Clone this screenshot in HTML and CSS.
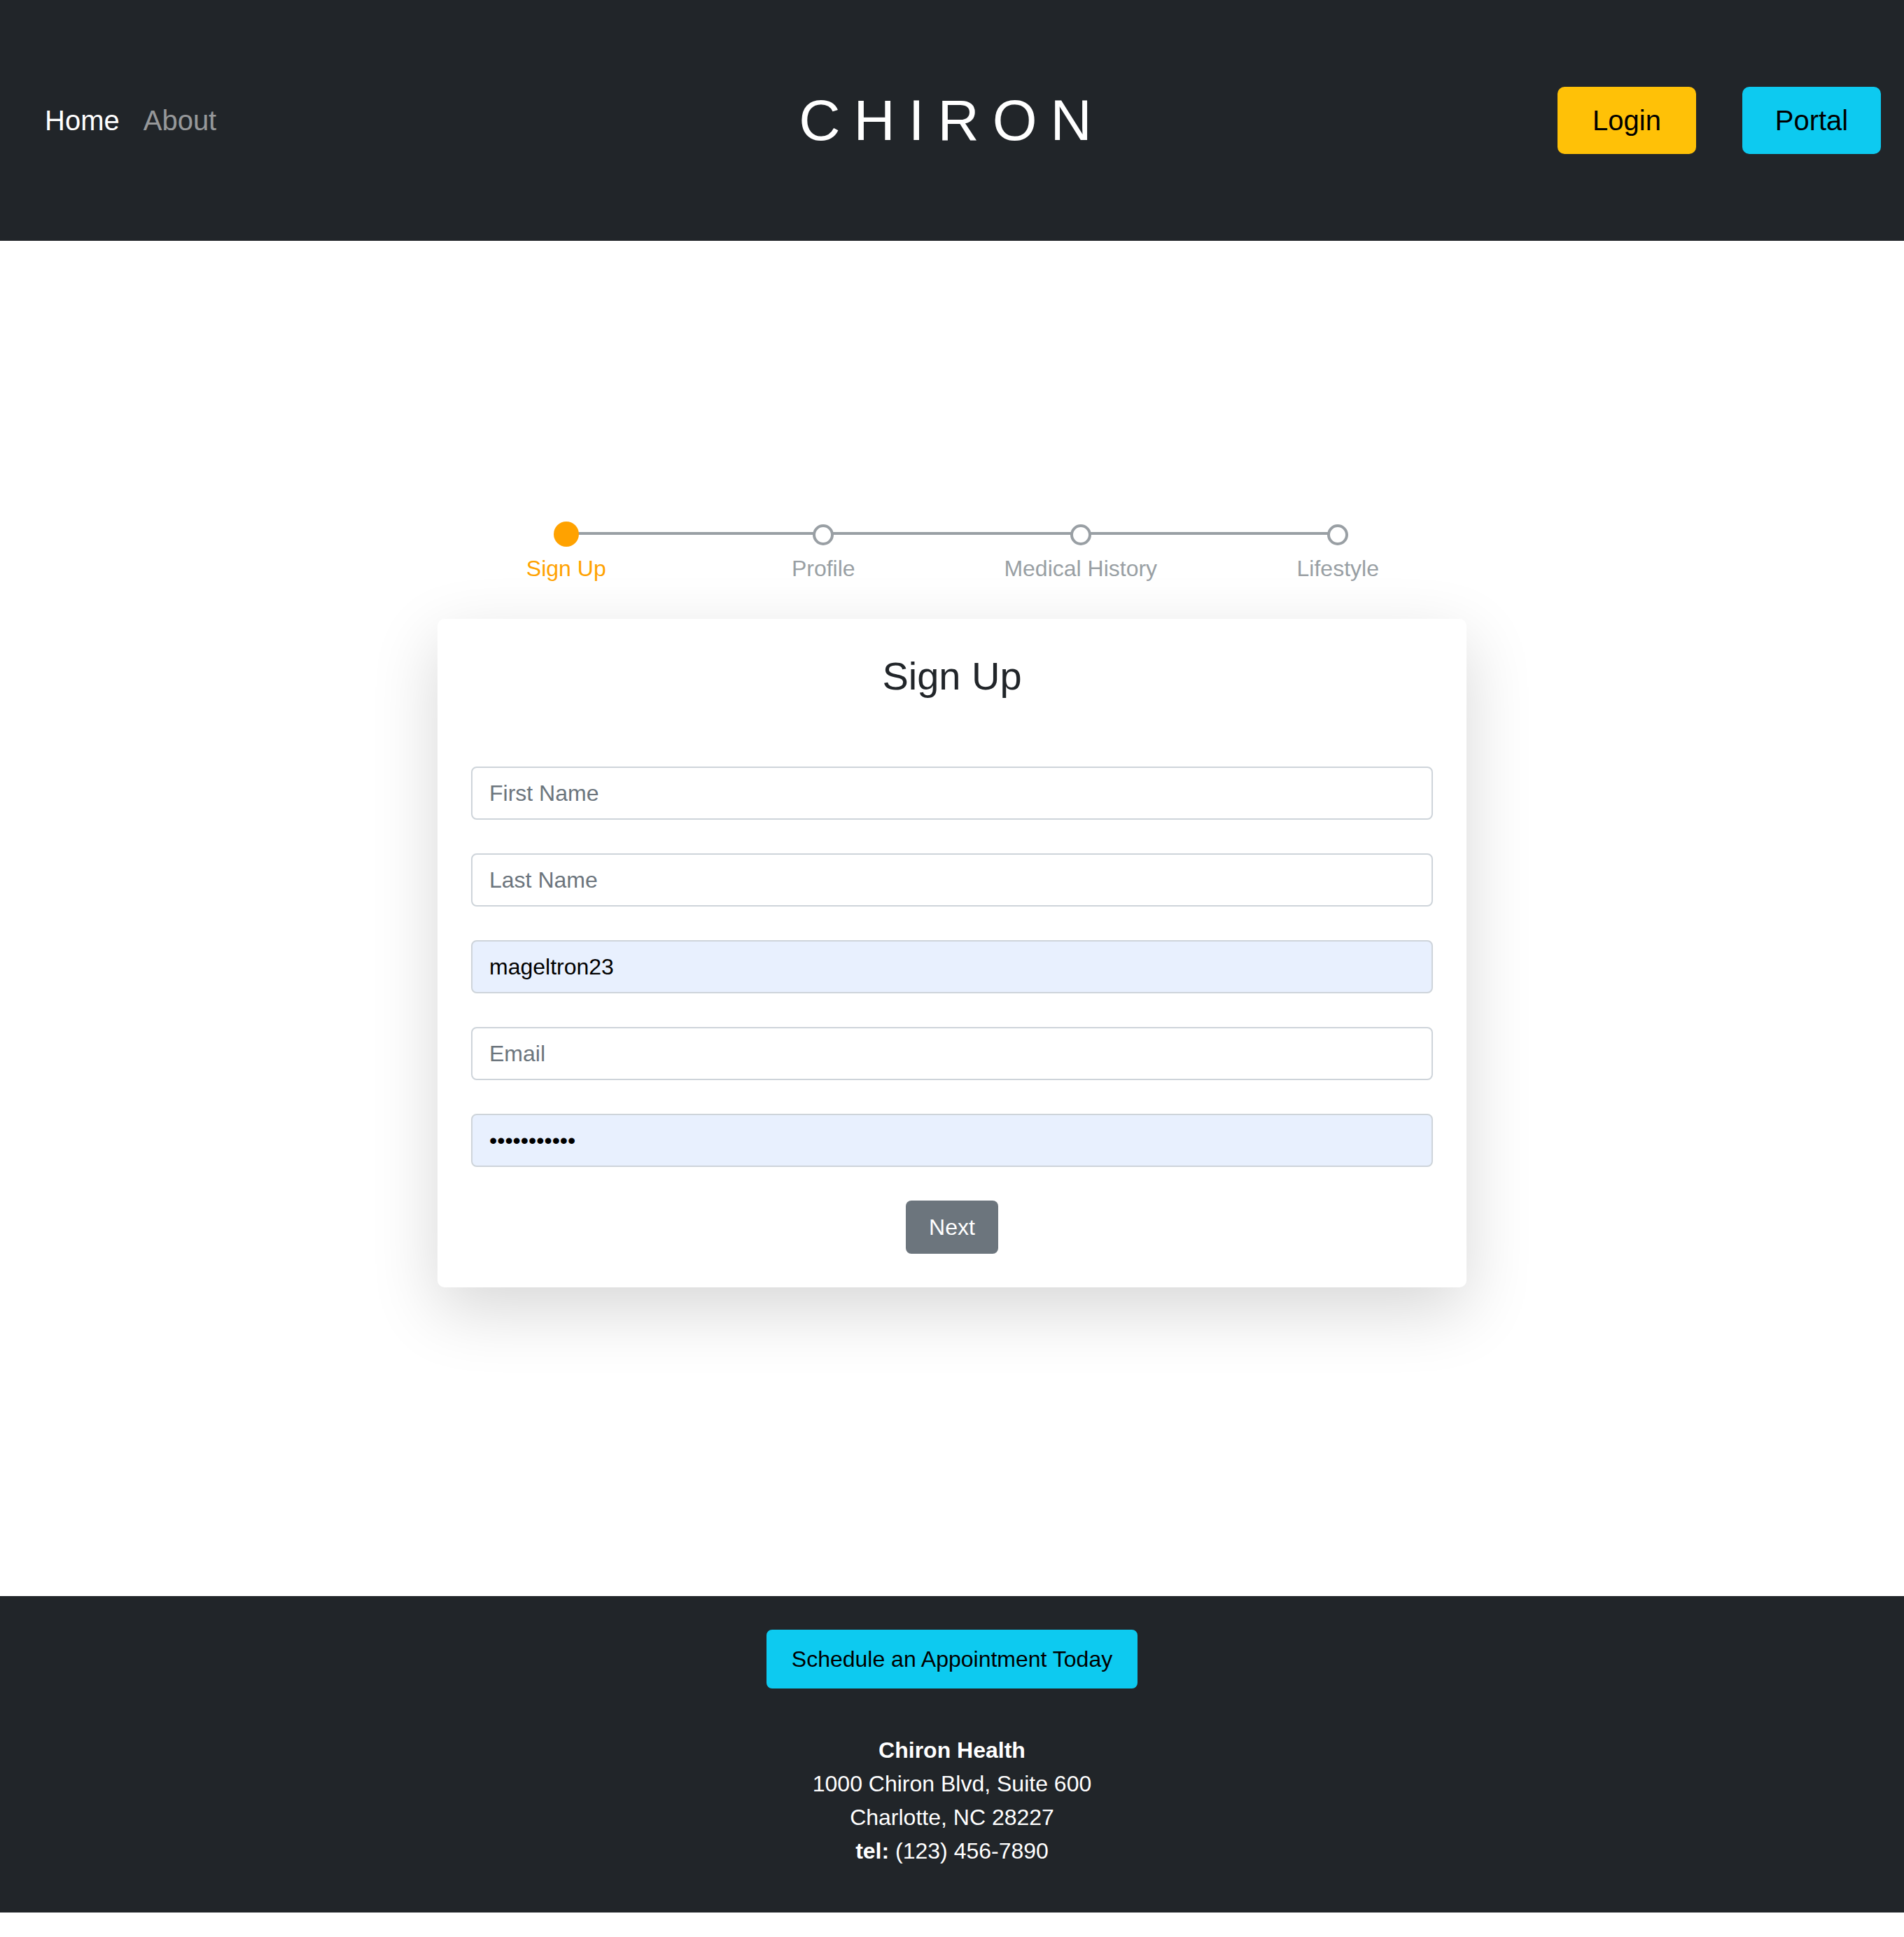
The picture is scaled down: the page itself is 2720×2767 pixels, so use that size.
FILE: index.html
```html
<!DOCTYPE html>
<html lang="en">
<head>
<meta charset="utf-8">
<title>Chiron - Sign Up</title>
<link rel="stylesheet" href="styles.css">
</head>
<body>
<header class="site-header">
  <nav class="nav-left">
    <a class="nav-link active" href="#">Home</a>
    <a class="nav-link" href="#">About</a>
  </nav>
  <div class="brand">CHIRON</div>
  <div class="nav-right">
    <a class="hbtn hbtn-login" href="#">Login</a>
    <a class="hbtn hbtn-portal" href="#">Portal</a>
  </div>
</header>

<main class="main">
  <div class="wrap">
    <ol class="steps">
      <li class="step current"><span class="dot-row"><span class="dot"></span></span><span class="step-label">Sign Up</span></li>
      <li class="step"><span class="dot-row"><span class="dot"></span></span><span class="step-label">Profile</span></li>
      <li class="step"><span class="dot-row"><span class="dot"></span></span><span class="step-label">Medical History</span></li>
      <li class="step"><span class="dot-row"><span class="dot"></span></span><span class="step-label">Lifestyle</span></li>
    </ol>

    <form class="card">
      <h3 class="card-title">Sign Up</h3>
      <input class="field" type="text" placeholder="First Name">
      <input class="field" type="text" placeholder="Last Name">
      <input class="field autofill" type="text" placeholder="Username" value="mageltron23">
      <input class="field" type="email" placeholder="Email">
      <input class="field autofill" type="password" placeholder="Password" value="12345678901">
      <div class="actions"><button class="btn-next" type="button">Next</button></div>
    </form>
  </div>
</main>

<footer class="site-footer">
  <a class="btn-schedule" href="#">Schedule an Appointment Today</a>
  <address class="address">
    <strong>Chiron Health</strong><br>
    1000 Chiron Blvd, Suite 600<br>
    Charlotte, NC 28227<br>
    <strong>tel:</strong> (123) 456-7890
  </address>
</footer>
</body>
</html>
```

FILE: styles.css
```css
* { box-sizing: border-box; }

html, body {
  margin: 0;
  padding: 0;
  background: #ffffff;
}

body {
  font-family: "Liberation Sans", Arial, Helvetica, sans-serif;
  color: #212529;
  font-size: 32px;
  line-height: 1.5;
}

a { text-decoration: none; }

/* Header */
.site-header {
  height: 344px;
  background: #212529;
  display: grid;
  grid-template-columns: 1fr auto 1fr;
  align-items: center;
  padding: 0 33px;
}

.nav-left {
  display: flex;
  gap: 34px;
  align-items: center;
  padding-left: 31px;
}

.nav-link {
  font-size: 40px;
  line-height: 60px;
  color: rgba(255, 255, 255, 0.55);
}

.nav-link.active { color: #ffffff; }

.brand {
  color: #ffffff;
  font-size: 82px;
  line-height: 1;
  letter-spacing: 19px;
  font-weight: 400;
}

.nav-right {
  display: flex;
  justify-content: flex-end;
  gap: 66px;
}

.hbtn {
  width: 198px;
  height: 96px;
  display: flex;
  align-items: center;
  justify-content: center;
  font-size: 40px;
  color: #000000;
  border-radius: 10px;
}

.hbtn-login { background: #ffc107; }
.hbtn-portal { background: #0dcaf0; }

/* Main */
.main {
  padding: 399px 0 441px;
}

.wrap {
  width: 1470px;
  margin: 0 auto;
}

.steps {
  list-style: none;
  margin: 0;
  padding: 0;
  display: grid;
  grid-template-columns: repeat(4, 1fr);
  position: relative;
}

.steps::before {
  content: "";
  position: absolute;
  left: 12.5%;
  right: 12.5%;
  top: 17px;
  height: 4px;
  background: #999fa4;
}

.step {
  display: flex;
  flex-direction: column;
  align-items: center;
  position: relative;
}

.dot-row {
  height: 38px;
  display: flex;
  align-items: center;
  justify-content: center;
}

.dot {
  width: 30px;
  height: 30px;
  border-radius: 50%;
  border: 4px solid #999fa4;
  background: #ffffff;
  margin-top: 4px;
}

.step.current .dot {
  width: 36px;
  height: 36px;
  border: 0;
  background: #ffa200;
  margin-top: 2px;
}

.step-label {
  margin-top: 7px;
  font-size: 32px;
  line-height: 48px;
  color: #999fa4;
}

.step.current .step-label { color: #ffa200; }

/* Card */
.card {
  margin-top: 48px;
  background: #ffffff;
  border-radius: 10px;
  box-shadow: 0 32px 96px rgba(0, 0, 0, 0.16);
  padding: 48px;
  display: flex;
  flex-direction: column;
}

.card-title {
  margin: 0 0 96px;
  text-align: center;
  font-size: 56px;
  line-height: 1.2;
  font-weight: 400;
  color: #212529;
}

.field {
  display: block;
  width: 100%;
  height: 76px;
  margin: 0 0 48px;
  padding: 0 24px;
  border: 2px solid #ced4da;
  border-radius: 8px;
  font-family: "Liberation Sans", Arial, sans-serif;
  font-size: 32px;
  color: #000000;
  background: #ffffff;
  outline: none;
}

.field::placeholder { color: #6c757d; opacity: 1; }

.field.autofill { background: #e8f0fe; }

.actions {
  display: flex;
  justify-content: center;
}

.btn-next {
  width: 132px;
  height: 76px;
  border: 0;
  border-radius: 8px;
  background: #6c757d;
  color: #ffffff;
  font-family: "Liberation Sans", Arial, sans-serif;
  font-size: 32px;
  padding: 0;
}

/* Footer */
.site-footer {
  background: #212529;
  color: #ffffff;
  text-align: center;
  padding: 48px 0 64px;
}

.btn-schedule {
  display: inline-block;
  background: #0dcaf0;
  color: #000000;
  font-size: 32px;
  line-height: 48px;
  padding: 16px 34px;
  border: 2px solid #0dcaf0;
  border-radius: 8px;
}

.address {
  margin-top: 64px;
  font-style: normal;
  font-size: 32px;
  line-height: 48px;
}
```
